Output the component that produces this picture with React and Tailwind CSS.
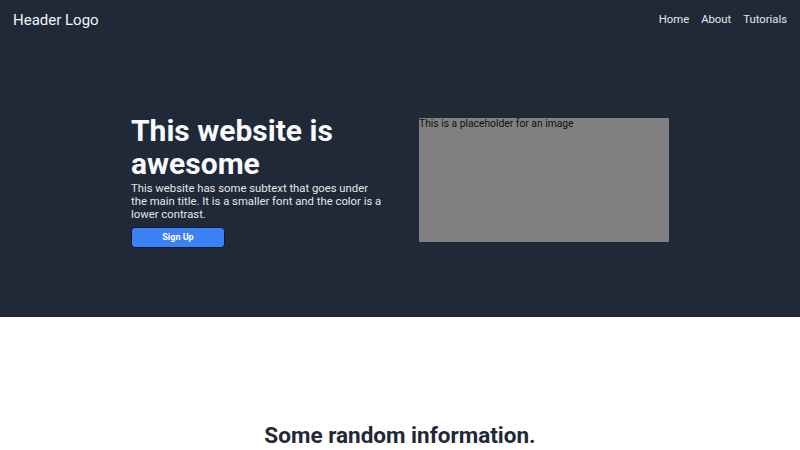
const App = () => {
  return (
    <div className="min-h-screen bg-white font-['Roboto',sans-serif]">
      <div className="bg-[#1f2937] pb-[69px]">
        <header className="flex items-center justify-between px-[13px] h-[40px]">
          <div className="text-[15px] text-[#f3f4f6]">Header Logo</div>
          <nav className="flex gap-[12px] text-[11.3px] text-[#e5e7eb]">
            <a href="#">Home</a>
            <a href="#">About</a>
            <a href="#">Tutorials</a>
          </nav>
        </header>

        <section className="mx-auto mt-[70px] flex w-[538px] items-start justify-between">
          <div className="w-[250px] pt-[4px]">
            <h1 className="text-[30px] font-bold leading-[33px] text-[#f9fafb]">
              This website is awesome
            </h1>
            <p className="mt-[2px] w-[253px] text-[11.3px] leading-[13px] text-[#e5e7eb]">
              This website has some subtext that goes under the main title. It is a
              smaller font and the color is a lower contrast.
            </p>
            <button className="mt-[6px] h-[21px] w-[94px] rounded border border-[#111827] bg-[#3b82f6] text-[9px] font-bold text-white">
              Sign Up
            </button>
          </div>
          <div className="w-[250px] h-[124px] mt-[8px] bg-[#808080] text-[10.3px] leading-[12px] text-[#111]">
            This is a placeholder for an image
          </div>
        </section>
      </div>

      <section className="pt-[102px] text-center">
        <h2 className="text-[22.5px] font-bold text-[#1f2937]">Some random information.</h2>
      </section>
    </div>
  );
};

export default App;
